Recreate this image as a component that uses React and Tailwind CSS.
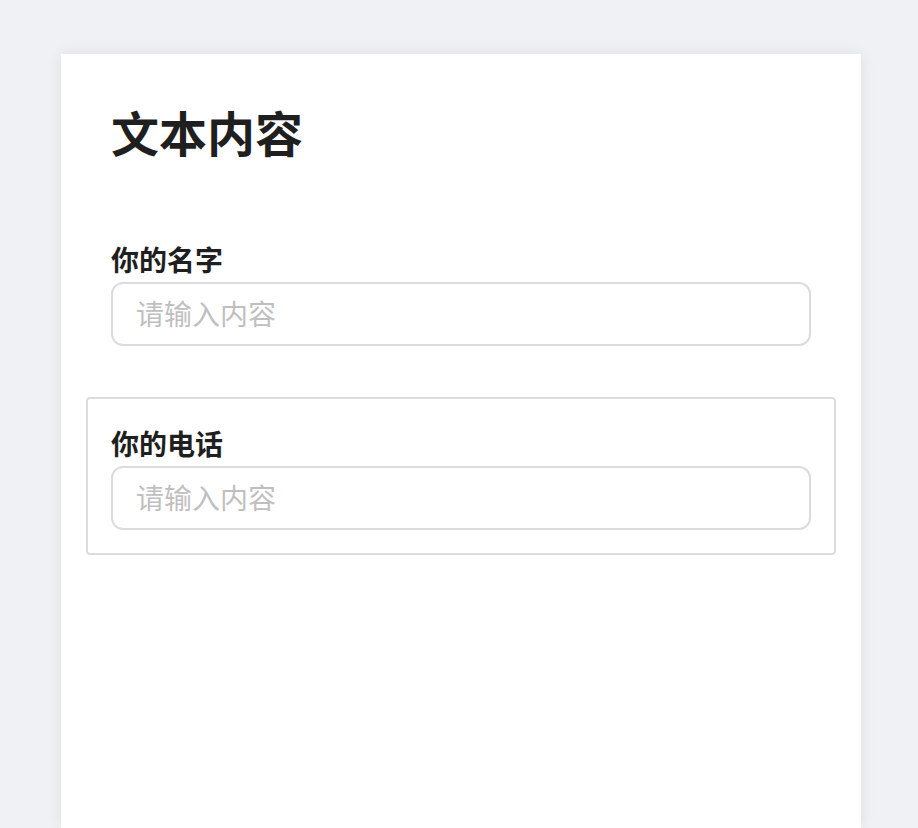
const Field = ({ label, bordered }) => (
  <div
    className={`rounded-[4px] border-2 p-[23px] ${
      bordered ? "border-[#dcdcdf]" : "border-transparent"
    }`}
  >
    <label className="block text-[28px] leading-[42px] font-bold text-[#1f1f1f] mb-[2px]">
      {label}
    </label>
    <input
      type="text"
      placeholder="请输入内容"
      className="block w-full h-16 rounded-xl border-2 border-[#dcdcdf] pl-[23px] pr-6 pb-[2px] text-[28px] text-[#1f1f1f] placeholder:text-[#bfbfbf] outline-none"
    />
  </div>
);

export default function App() {
  return (
    <div
      className="min-h-[828px] bg-[#f0f1f5] pt-[54px] px-[61px]"
      style={{ fontFamily: '"Noto Sans CJK SC", "Noto Sans", sans-serif' }}
    >
      <div className="w-[800px] min-h-[774px] bg-white shadow-[0_0_14px_rgba(0,0,0,0.08)] px-[25px] pt-[41px]">
        <h1 className="px-[25px] text-[48px] leading-[72px] font-bold text-[#1f1f1f] mb-[46px]">
          文本内容
        </h1>
        <div className="flex flex-col gap-[26px]">
          <Field label="你的名字" />
          <Field label="你的电话" bordered />
        </div>
      </div>
    </div>
  );
}
